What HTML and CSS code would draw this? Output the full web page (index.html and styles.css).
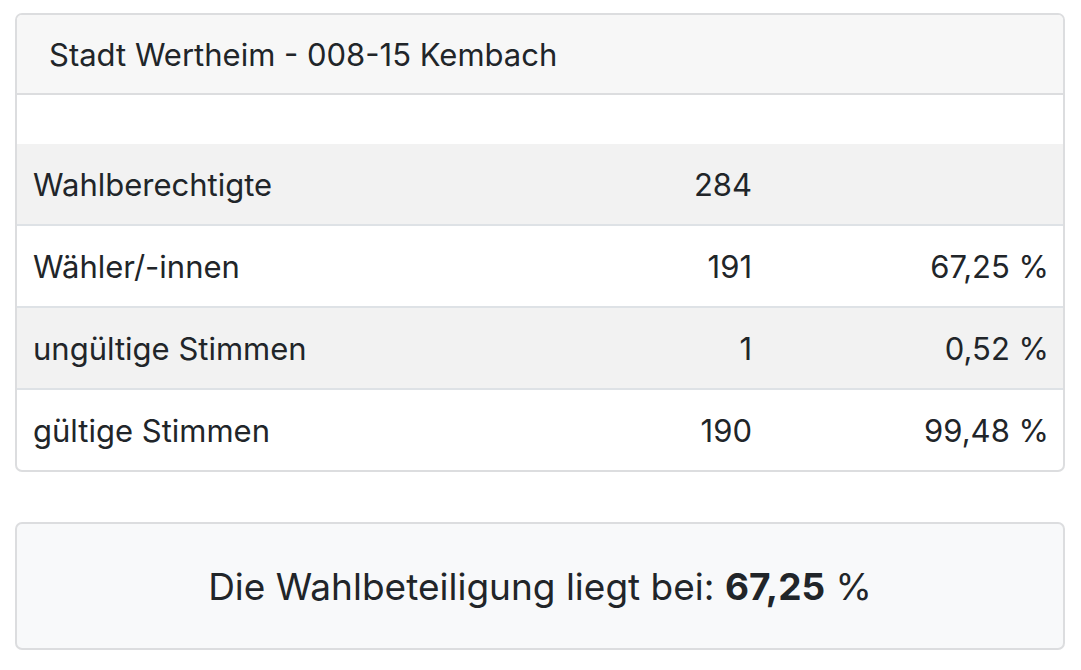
FILE: index.html
```html
<!DOCTYPE html>
<html lang="de">
<head>
    <meta charset="UTF-8">
    <title>Stadt Wertheim - 008-15 Kembach</title>
    <link rel="stylesheet" href="styles.css">
</head>
<body>
    <div class="card">
        <div class="card-header">Stadt Wertheim - 008-15 Kembach</div>
        <div class="card-body">
            <table class="result-table">
                <tr>
                    <td class="label">Wahlberechtigte</td>
                    <td class="num">284</td>
                    <td class="pct"></td>
                </tr>
                <tr>
                    <td class="label">Wähler/-innen</td>
                    <td class="num">191</td>
                    <td class="pct">67,25 %</td>
                </tr>
                <tr>
                    <td class="label">ungültige Stimmen</td>
                    <td class="num">1</td>
                    <td class="pct">0,52 %</td>
                </tr>
                <tr>
                    <td class="label">gültige Stimmen</td>
                    <td class="num">190</td>
                    <td class="pct">99,48 %</td>
                </tr>
            </table>
        </div>
    </div>

    <div class="turnout">
        Die Wahlbeteiligung liegt bei: <strong>67,25</strong> %
    </div>
</body>
</html>
```

FILE: styles.css
```css
body {
    font-family: Inter, "Liberation Sans", Arial, sans-serif;
    color: #212529;
    background-color: #ffffff;
    margin: 0;
    padding: 13px 16px 0 15px;
}

.card {
    border: 2px solid #dcdddf;
    border-radius: 7px;
    overflow: hidden;
}

.card-header {
    background-color: #f7f7f7;
    border-bottom: 2px solid #dcdddf;
    padding: 0 32px;
    height: 78px;
    line-height: 80px;
    font-size: 31px;
}

.card-body {
    padding-top: 49px;
}

.result-table {
    width: 100%;
    border-collapse: collapse;
    font-size: 31px;
}

.result-table td {
    height: 80px;
    padding: 0 16px;
    border-top: 2px solid #dee2e6;
}

.result-table tr:first-child td {
    border-top: none;
}

.result-table tr:nth-child(odd) td {
    background-color: #f2f2f2;
}

.result-table .label {
    width: 500px;
}

.result-table .num {
    text-align: right;
}

.result-table .pct {
    text-align: right;
    padding-right: 14px;
    width: 265px;
}

.turnout {
    margin-top: 50px;
    background-color: #f8f9fa;
    border: 2px solid #dcdddf;
    border-radius: 7px;
    height: 124px;
    line-height: 126px;
    text-align: center;
    font-size: 37px;
}

.turnout strong {
    font-weight: 700;
}
```
